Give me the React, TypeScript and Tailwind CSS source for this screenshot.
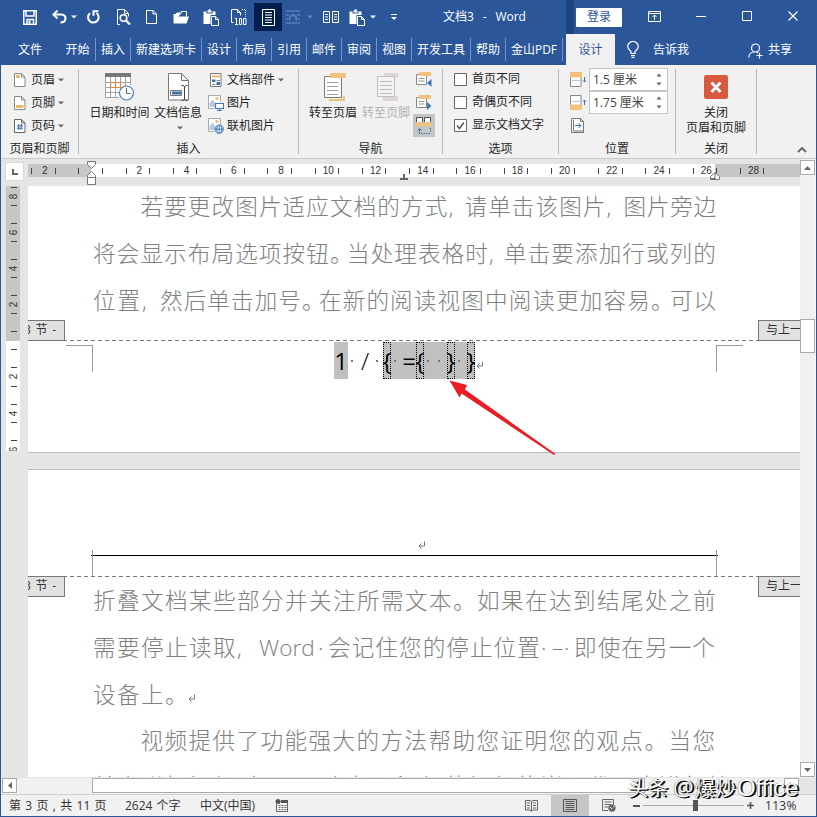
import React from "react";

const UI = "font-['Open_Sans','Noto_Sans_CJK_SC',sans-serif]";

type IconProps = { w: number; h: number; cls?: string; children: React.ReactNode };
const Ico = ({ w, h, cls = "", children }: IconProps) => (
  <svg width={w} height={h} viewBox={`0 0 ${w} ${h}`} fill="none" className={`block shrink-0 ${cls}`}>
    {children}
  </svg>
);

const Caret = ({ cls = "" }: { cls?: string }) => (
  <Ico w={6} h={4} cls={cls}>
    <path d="M0 0.5h6l-3 3z" fill="currentColor" />
  </Ico>
);

/* ---------- Title bar ---------- */

const PasteIcon = ({ cls }: { cls?: string }) => (
  <Ico w={16} h={17} cls={cls}>
    <path d="M0.5 2.5h3v2h6v-2h3v3.5h-5v9h-7z" fill="#fff" />
    <path d="M4.5 3.5v-2h1.300v-1.500h1.500v1.500h1.200v2z" fill="#fff" />
    <path d="M8.500 7.500h4l3 3v6h-7z M12.500 7.500v3h3" fill="#2b579a" stroke="#fff" />
  </Ico>
);

const TitleBar = () => (
  <div className="flex h-[34px] items-center text-white">
    <Ico w={14} h={15} cls="ml-[22px]">
      <path d="M0.750 0.750h12.500v13.500h-12.500z" stroke="#fff" strokeWidth="1.500" />
      <path d="M3 1v5h8v-5M4 14v-4.500h6.500v4.500" stroke="#fff" strokeWidth="1.500" />
      <path d="M5.500 10.500h2v3h-2z" fill="#fff" />
    </Ico>
    <Ico w={15} h={14} cls="ml-[15px]">
      <path d="M1.500 4.500H9.500C15 4.500 15 12.500 8.500 12.500" stroke="#fff" strokeWidth="2" />
      <path d="M5.500 0.500L1.500 4.500L5.500 8.500" stroke="#fff" strokeWidth="2" />
    </Ico>
    <Caret cls="ml-1" />
    <Ico w={14} h={14} cls="ml-[9px]">
      <path d="M4 3.200A5.300 5.300 0 1 0 10.500 3" stroke="#fff" strokeWidth="2" />
      <path d="M7.500 0.300v5.500M7.500 1.300h5" stroke="#fff" strokeWidth="2" />
    </Ico>
    <Ico w={15} h={16} cls="ml-4">
      <path d="M4 15.500H1.500V0.500h7l4 4v3M8.500 0.500v4h4" stroke="#fff" />
      <circle cx="7.500" cy="9" r="3.300" stroke="#fff" strokeWidth="1.600" />
      <path d="M10 11.500l4 4" stroke="#fff" strokeWidth="2.200" />
    </Ico>
    <Ico w={11} h={14} cls="ml-[15px]">
      <path d="M0.500 0.500h6.500l3.500 3.500v9.500H0.500zM7 0.500v3.500h3.500" stroke="#fff" />
    </Ico>
    <Ico w={16} h={13} cls="ml-4">
      <path d="M0.500 12V3h2L4 1.500h3V3" fill="#fff" />
      <path d="M2 4.500h4l2-2V0.500h5.500v5" stroke="#fff" />
      <path d="M3 5.500h13l-2.500 7H0.500z" fill="#fff" />
    </Ico>
    <PasteIcon cls="ml-3.5" />
    <Ico w={16} h={16} cls="ml-3">
      <path d="M2.500 13.500h-2V0.500h6l3 3v3M6.500 0.500v3h3" stroke="#fff" />
      <path d="M11 0.500h3.500v7" stroke="#fff" strokeDasharray="1 1" />
      <path d="M5.500 9v6M4 15.500h3M4 9.500h1.500M8.500 9.500h2v6h-2zM12.500 9.500h2.500v6h-2.500z" stroke="#fff" />
    </Ico>
    <div className="ml-[7px] flex h-7 w-7 items-center justify-center bg-[#001f4f]">
      <Ico w={13} h={17}>
        <path d="M0.500 0.500h12v16H0.500zM3 3.500h7M3 6h7M3 8.500h7M3 11h7M3 13.500h7" stroke="#fff" />
      </Ico>
    </div>
    <Ico w={14} h={14} cls="ml-1 opacity-40">
      <path d="M0 1h14M0 13h14M0 5h3M11 5h3M0 9h2M12 9h2" stroke="#9db7de" strokeWidth="1.500" />
      <path d="M3.500 10.500C3.500 3 10.500 3 10.500 10.500" stroke="#9db7de" strokeWidth="2" />
    </Ico>
    <Caret cls="ml-[7px] opacity-30" />
    <Ico w={16} h={13} cls="ml-2.5">
      <path d="M0.500 0.500h6v11h-6zM9.500 0.500h6v11h-6zM2 3.500h3M2 6h3M2 8.500h3M11 3.500h3M11 6h3M11 8.500h3" stroke="#fff" />
    </Ico>
    <PasteIcon cls="ml-2.5" />
    <Caret cls="ml-[5px]" />
    <Ico w={6} h={7} cls="ml-[15px]">
      <path d="M0 0.500h6" stroke="#fff" />
      <path d="M0 3h6l-3 3z" fill="#fff" />
    </Ico>
    <div className="ml-[46px] w-[123px] whitespace-pre text-[12px] leading-4 [word-spacing:1.3px]">文档3  -  Word</div>
    <div className="h-[34px] w-2 bg-[#1f4480]" />
    <div className="ml-0.5 flex h-[19px] w-[46px] items-center justify-center rounded-[1px] bg-white text-[12px] leading-4 text-[#2b579a]">登录</div>
    <Ico w={13} h={11} cls="ml-[26px] -mt-px">
      <path d="M0.500 0.500h12v10H0.500zM0.500 2.500h12M6.500 9V4M4.500 6l2-2l2 2" stroke="#fff" />
    </Ico>
    <Ico w={10} h={2} cls="ml-[35px]">
      <path d="M0 0.500h10" stroke="#fff" />
    </Ico>
    <Ico w={10} h={10} cls="ml-9 -mt-0.5">
      <path d="M0.500 0.500h9v9h-9z" stroke="#fff" />
    </Ico>
    <Ico w={10} h={10} cls="ml-9 -mt-0.5">
      <path d="M0.500 0.500l9 9M9.500 0.500l-9 9" stroke="#fff" strokeWidth="1.200" />
    </Ico>
  </div>
);

/* ---------- Ribbon tabs ---------- */

const Tab = ({ w, children, last }: { w: string; children: string; last?: boolean }) => (
  <div className={`${w} flex h-[23px] shrink-0 items-center justify-center border-r ${last ? "border-transparent" : "border-[#7395c8]"}`}>{children}</div>
);

const Tabs = () => (
  <div className="flex h-[31px] items-center whitespace-nowrap text-[12px] leading-4 text-white">
    <Tab w="w-[59px]" last>文件</Tab>
    <Tab w="w-9">开始</Tab>
    <Tab w="w-[35px]">插入</Tab>
    <Tab w="w-[71px]">新建选项卡</Tab>
    <Tab w="w-[35px]">设计</Tab>
    <Tab w="w-[35px]">布局</Tab>
    <Tab w="w-[35px]">引用</Tab>
    <Tab w="w-[35px]">邮件</Tab>
    <Tab w="w-[35px]">审阅</Tab>
    <Tab w="w-[35px]">视图</Tab>
    <Tab w="w-[59px]">开发工具</Tab>
    <Tab w="w-[35px]">帮助</Tab>
    <Tab w="w-[57px]">金山PDF</Tab>
    <div className="ml-[3px] flex h-[31px] w-[49px] items-center justify-center bg-[#f1f1f1] text-[#2b579a]">设计</div>
    <Ico w={12} h={17} cls="ml-3">
      <path d="M4 12.500V10.500C2 8.500 0.700 7.500 0.700 5.500a5.300 5 0 0 1 10.600 0C11.300 7.500 10 8.500 8 10.500V12.500zM4 14.500h4M4.500 16.300h3" stroke="#fff" strokeWidth="1.200" />
    </Ico>
    <div className="ml-3.5">告诉我</div>
    <Ico w={16} h={16} cls="ml-[59px] mt-0.5">
      <circle cx="7.500" cy="5" r="4" stroke="#fff" strokeWidth="1.200" />
      <path d="M0.700 14.500C1 11 3.500 9 6 9M8.500 9l1.500 1M11.500 9.500v6M8.500 12.500h6" stroke="#fff" strokeWidth="1.200" />
    </Ico>
    <div className="ml-1">共享</div>
  </div>
);

/* ---------- Ribbon ---------- */

const Group = ({ w, label, children }: { w: string; label: string; children: React.ReactNode }) => (
  <>
    <div className={`${w} flex shrink-0 flex-col pt-[3px]`}>
      <div className="flex h-[70px]">{children}</div>
      <div className="pt-[3px] text-center leading-4">{label}</div>
    </div>
    <div className="mt-1 h-[85px] w-px shrink-0 bg-[#b8b8b8]" />
  </>
);

const Row = ({ children }: { children: React.ReactNode }) => <div className="flex h-[23px] items-center">{children}</div>;

const pageOutline = "M0.500 0.500h7l3.500 3.500v9.500h-10.500zM7.500 0.500v3.500h3.500";

const Big = ({ cls, icon, label, caret }: { cls: string; icon: React.ReactNode; label: string; caret?: boolean }) => (
  <div className={`flex shrink-0 flex-col items-center ${cls}`}>
    <div className="mt-[5px] h-8">{icon}</div>
    <div className="leading-4">{label}</div>
    {caret && <Caret cls="mt-[5px] ml-1 text-[#666]" />}
  </div>
);

const JumpIcon = ({ off }: { off?: boolean }) => {
  const o = off ? "#dcd8d8" : "#f2c27e";
  const g = off ? "#c4bcc4" : "#7a7a7a";
  return off ? (
    <Ico w={22} h={28} cls="ml-1">
      <path d="M7 0h14v5H7zM6 23h15v5H6z" fill={o} />
      <path d="M0.500 3.500h17v20h-17z" fill="#f5f2f5" stroke={g} />
      <path d="M3 8.500h12M3 12.500h12M3 16.500h12M3 20.500h12" stroke={g} />
    </Ico>
  ) : (
    <Ico w={22} h={28} cls="ml-1">
      <path d="M6 0h16v5H6z" fill={o} />
      <path d="M5 27h15v-4" stroke="#ecc17f" strokeWidth="2" />
      <path d="M0.500 3.500h17v21h-17z" fill="#fff" stroke={g} />
      <path d="M6 1h12v4H6z" fill={o} />
      <path d="M3 9.500h11M3 13.500h11M3 17.500h11M3 21.500h11" stroke="#a0a0a0" />
    </Ico>
  );
};

const StepIcon = ({ next }: { next?: boolean }) => (
  <Ico w={16} h={16}>
    <path d="M0.500 2.500h10v10h-10z" fill="#fff" stroke="#888" />
    <path d="M3 0h12v4H3z" fill="#f2c27e" />
    <path d="M2.500 6.500h6M2.500 9h6" stroke="#999" />
    <path d={next ? "M11 7l4.500 4l-4.500 4z" : "M15.500 7l-4.500 4l4.500 4z"} fill="#3d78b8" />
  </Ico>
);

const Check = ({ on, children }: { on?: boolean; children: string }) => (
  <Row>
    <Ico w={13} h={13} cls="ml-[11px] -mt-px">
      <path d="M0.500 0.500h12v12h-12z" fill="#fff" stroke="#666" />
      {on && <path d="M3 6.500l2.500 3l4.500-6" stroke="#555" strokeWidth="1.400" />}
    </Ico>
    <span className="-mt-px ml-[5px]">{children}</span>
  </Row>
);

const Spin = ({ children }: { children: string }) => (
  <div className="flex h-[23px] w-[79px] items-center border border-[#c6c6c6] bg-white pl-[3px] text-[12px] text-[#444]">
    <span className="w-[63px] whitespace-nowrap">{children}</span>
    <Ico w={6} h={13}>
      <path d="M0.500 3.500l2.500-3l2.500 3zM0.500 9.500l2.500 3l2.500-3z" fill="#666" />
    </Ico>
  </div>
);

const PictureIcon = ({ globe }: { globe?: boolean }) => (
  <Ico w={16} h={16}>
    <path d="M6 13.500H0.500v-13h12v6" fill="#fff" stroke="#aaa" />
    <circle cx="9" cy="3.500" r="1.700" fill="#f2c27e" />
    <path d="M1.500 12v-4l3-3.500l3.500 4v3.500z" fill="#b8cbe0" />
    {globe ? (
      <>
        <circle cx="11.200" cy="11.200" r="4.200" fill="#fff" stroke="#3d78b8" />
        <path d="M7 11.200h8.400M11.200 7v8.400M9.700 7.500c-1.300 2-1.300 5.400 0 7.400M12.700 7.500c1.300 2 1.300 5.400 0 7.400" stroke="#3d78b8" />
      </>
    ) : (
      <>
        <path d="M7.500 8.500h8v5h-8z" fill="#fff" stroke="#3d78b8" strokeWidth="1.200" />
        <path d="M11.500 14v1.500M9 15.500h5" stroke="#3d78b8" />
      </>
    )}
  </Ico>
);

const Ribbon = () => (
  <div className="flex h-[94px] border-b border-[#c9c9c9] bg-[#f1f1f1] text-[12px] leading-4 whitespace-nowrap text-[#262626]">
    <Group w="w-[77px]" label="页眉和页脚">
      <div className="pl-[13px]">
        <Row>
          <Ico w={12} h={14}>
            <path d={pageOutline} fill="#fff" stroke="#888" />
            <path d="M2 2h4v3H2z" fill="#ecb96b" />
          </Ico>
          <span className="ml-[5px]">页眉</span>
          <Caret cls="ml-[3px] text-[#666]" />
        </Row>
        <Row>
          <Ico w={12} h={14}>
            <path d={pageOutline} fill="#fff" stroke="#888" />
            <path d="M2 9h7.500v3H2z" fill="#ecb96b" />
          </Ico>
          <span className="ml-[5px]">页脚</span>
          <Caret cls="ml-[3px] text-[#666]" />
        </Row>
        <Row>
          <Ico w={12} h={14}>
            <path d={pageOutline} fill="#fff" stroke="#666" />
            <path d="M5 5L4.300 11M7.500 5L6.800 11M3 6.800h6M2.800 9.200h6" stroke="#3d6fb0" />
          </Ico>
          <span className="ml-[5px]">页码</span>
          <Caret cls="ml-[3px] text-[#666]" />
        </Row>
      </div>
    </Group>

    <Group w="w-[219px]" label="插入">
      <Big
        cls="ml-2.5 w-[61px]"
        label="日期和时间"
        icon={
          <Ico w={30} h={28}>
            <path d="M0.500 4h25v20h-25z" fill="#fff" />
            <path d="M0 0h26v4H0z" fill="#777" />
            <path d="M0.500 4v20.500M5.500 4v20.500M10.500 4v20.500M15.500 4v14M20.500 4v10M25.500 4v8M0 9.500h26M0 14.500h18M0 19.500h14M0 24.500h14" stroke="#a3a3a3" />
            <path d="M5.500 9.500h5v5h-5zM10.500 9.500h5v5h-5z" stroke="#e08a4a" strokeWidth="1.200" />
            <circle cx="21.500" cy="20" r="7" fill="#fff" stroke="#4d7fbd" strokeWidth="1.200" />
            <path d="M21.500 15v5.500h4" stroke="#666" />
          </Ico>
        }
      />
      <Big
        cls="ml-[3px] mr-px w-[50px]"
        label="文档信息"
        caret
        icon={
          <Ico w={22} h={28} cls="ml-0.5">
            <path d="M0.500 0.500h13l7 7v19.500H0.500zM13.500 0.500v7h7" fill="#fff" stroke="#777" />
            <path d="M2.500 17.500h11v5h-11z" stroke="#777" fill="#fff" />
            <path d="M4 18.500h9v3H4z" fill="#3d6fb0" />
            <path d="M13.500 12.500h1.500l1.500 1l1.500-1h1.500M16.500 13.500v13M13.500 27.500h1.500l1.500-1l1.500 1h1.500" stroke="#444" />
          </Ico>
        }
      />
      <div className="ml-1">
        <Row>
          <Ico w={12} h={14} cls="ml-0.5">
            <path d="M0.500 0.500h10.500v13H0.500z" fill="#fff" stroke="#777" />
            <path d="M2 2.500h8v2H2z" fill="#ecb96b" />
            <path d="M2 6.500h3.500v2.500H2zM6.500 9h3.500v3H6.500z" fill="#3d6fb0" />
            <path d="M6.500 7.500h3.500M2 11.500h3.500" stroke="#888" />
          </Ico>
          <span className="ml-[5px]">文档部件</span>
          <Caret cls="ml-[3px] text-[#666]" />
        </Row>
        <Row>
          <PictureIcon />
          <span className="ml-[3px]">图片</span>
        </Row>
        <Row>
          <PictureIcon globe />
          <span className="ml-[3px]">联机图片</span>
        </Row>
      </div>
    </Group>

    <Group w="w-[143px]" label="导航">
      <Big cls="ml-[9px] w-[50px]" label="转至页眉" icon={<JumpIcon />} />
      <Big cls="ml-[3px] w-[50px] text-[#b1b1b1]" label="转至页脚" icon={<JumpIcon off />} />
      <div className="ml-0.5 w-[22px]">
        <div className="flex h-[23px] items-center justify-center"><StepIcon /></div>
        <div className="flex h-[23px] items-center justify-center"><StepIcon next /></div>
        <div className="flex h-[23px] items-center justify-center bg-[#c5c5c5]">
          <Ico w={16} h={18}>
            <path d="M0.500 5v-4.500h6v4.500M8.500 5v-4.500h6v4.500" fill="#fff" stroke="#555" />
            <path d="M0 5.500h16v3.500H0z" fill="#f2c27e" />
            <path d="M3.500 17v-5M1.500 13.500l2-2l2 2" stroke="#3d78b8" />
            <path d="M5 16.500h10M14.500 11v5" stroke="#3d78b8" strokeDasharray="1.500 1" />
          </Ico>
        </div>
      </div>
    </Group>

    <Group w="w-[115px]" label="选项">
      <div>
        <Check>首页不同</Check>
        <Check>奇偶页不同</Check>
        <Check on>显示文档文字</Check>
      </div>
    </Group>

    <Group w="w-[116px]" label="位置">
      <div className="ml-[11px] w-[19px]">
        <Row>
          <Ico w={17} h={15}>
            <path d="M0.500 5v9.500h10.500V5" stroke="#888" fill="#fff" />
            <path d="M0 0h12v5.500H0z" fill="#f2c27e" />
            <path d="M2.500 8.500h8" stroke="#888" strokeDasharray="1 1" />
            <path d="M14.500 5v5M13 8.500l1.500 1.500l1.500-1.500" stroke="#3d6fb0" />
          </Ico>
        </Row>
        <Row>
          <Ico w={17} h={15}>
            <path d="M0.500 10V0.500h10.500V10" stroke="#888" fill="#fff" />
            <path d="M0 9.500h12v5.500H0z" fill="#f2c27e" />
            <path d="M2.500 6.500h8" stroke="#888" strokeDasharray="1 1" />
            <path d="M14.500 10V5M13 6.500l1.500-1.500l1.500 1.500" stroke="#3d6fb0" />
          </Ico>
        </Row>
        <Row>
          <Ico w={13} h={15} cls="-mt-px ml-px">
            <path d="M0.500 0.500h9l3 3v11h-12zM9.500 0.500v3h3M2.500 2v11M2.500 13h10" fill="#fff" stroke="#777" />
            <path d="M4 7.500h6M7.500 5l2.500 2.500l-2.500 2.500" stroke="#3d6fb0" />
          </Ico>
        </Row>
      </div>
      <div>
        <Spin>1.5 厘米</Spin>
        <Spin>1.75 厘米</Spin>
      </div>
    </Group>

    <Group w="w-20" label="关闭">
      <div className="flex w-full flex-col items-center">
        <Ico w={24} h={24} cls="mt-[7px]">
          <rect width="24" height="24" rx="2" fill="#d9593f" />
          <path d="M7.500 7.500l9 9.500M16.500 7.500l-9 9.500" stroke="#fff" strokeWidth="3" />
        </Ico>
        <div className="mt-1.5 leading-4">关闭</div>
        <div className="-mt-px leading-4">页眉和页脚</div>
      </div>
    </Group>
    <Ico w={10} h={6} cls="mt-[82px] ml-10">
      <path d="M1 5l4-4l4 4" stroke="#666" strokeWidth="1.800" />
    </Ico>
  </div>
);

/* ---------- Rulers ---------- */

const hCells = Array.from({ length: 32 }, (_, i) => i - 2);
const vCells = Array.from({ length: 15 }, (_, i) => i - 8);

const HRuler = () => (
  <div className="flex h-[27px] shrink-0 bg-[#e5e5e5]">
    <div className="mt-[3px] ml-1 flex h-[19px] w-[19px] items-center justify-center border border-[#dadada] bg-white">
      <Ico w={6} h={6}>
        <path d="M1 0v5h5" stroke="#666" strokeWidth="2" />
      </Ico>
    </div>
    <div className="relative mt-[5px] ml-1 flex h-[13px] w-[772px] bg-[linear-gradient(90deg,#c6c6c6_63px,#fff_63px,#fff_687px,#c6c6c6_687px)]">
      <div className="flex w-[772px] overflow-hidden pl-[3px]">
        {hCells.map((n) => (
          <div key={n} className="flex w-[23.63px] shrink-0 items-center">
            <div className="h-1.5 w-px bg-[#444]" />
            <div className="flex-1 pl-[3px] text-center font-['Liberation_Sans',sans-serif] text-[10px] leading-3 text-[#333]">
              {n !== 0 && n % 2 === 0 ? Math.abs(n) : ""}
            </div>
          </div>
        ))}
      </div>
      <Ico w={9} h={26} cls="absolute top-[-3px] left-[59px]">
        <path d="M0.500 0.500h8v3l-4 4l-4-4zM0.500 16.500v-2l4-4l4 4v2zM0.500 16.500h8v7h-8z" fill="#fff" stroke="#777" />
      </Ico>
      <Ico w={8} h={6} cls="absolute top-[10px] left-[372px]">
        <path d="M4 0v4M0 5h8" stroke="#666" strokeWidth="2" />
      </Ico>
      <Ico w={10} h={8} cls="absolute top-[8px] left-[682px]">
        <path d="M0.500 7.500v-3l4.500-4l4.500 4v3z" fill="#fff" stroke="#777" />
        <path d="M5 1v6.500M1 6.500h4" stroke="#666" />
      </Ico>
    </div>
  </div>
);

const VRuler = () => (
  <div className="h-[592px] w-[27px] shrink-0 bg-[#e5e5e5] pl-[5px]">
    <div className="h-[265px] w-3.5 overflow-hidden bg-[linear-gradient(180deg,#c6c6c6_155px,#fff_155px)] pt-px">
      {vCells.map((n) => (
        <div key={n} className="flex h-[18.050px] flex-col items-center">
          <div className="ml-0.5 h-px w-1.5 shrink-0 bg-[#444]" />
          <div className="ml-0.5 flex flex-1 -rotate-90 items-center font-['Liberation_Sans',sans-serif] text-[10px] leading-3 text-[#333]">
            {n !== 0 && n % 2 === 0 ? Math.abs(n) : ""}
          </div>
        </div>
      ))}
    </div>
  </div>
);

/* ---------- Document ---------- */

/* Each run is [text, advance in px]; characters are spread evenly over the advance. */
type Run = [string, number];
const EM = 22.6;

const Line = ({ runs, indent }: { runs: Run[]; indent?: boolean }) => (
  <div className={`flex h-[46.800px] items-center whitespace-pre ${indent ? "pl-[112.500px]" : "pl-[65px]"}`}>
    {runs.map(([t, w], i) => {
      const cjk = t.length > 1 && t.charCodeAt(0) > 0x2fff;
      return (
        <span
          key={i}
          className="shrink-0 overflow-visible"
          style={{ width: w, letterSpacing: cjk ? w / t.length - EM : 0 }}
        >
          {t}
        </span>
      );
    })}
  </div>
);

const SectionTag = ({ right, cls }: { right?: boolean; cls: string }) => (
  <div
    className={`absolute flex h-[21px] items-center overflow-hidden border border-[#777] bg-[#e1e1e1] pb-px text-[12px] leading-4 whitespace-pre text-[#333] ${
      right ? "right-0 w-[42px] border-r-0 pl-[7px]" : "left-0 w-[37px] justify-end border-l-0 pr-2 [word-spacing:1.5px]"
    } ${cls}`}
  >
    {right ? "与上一" : "3 节 -"}
  </div>
);

const Return = ({ cls = "" }: { cls?: string }) => (
  <Ico w={8} h={8} cls={cls}>
    <path d="M6.500 0.500v4.500H1M3.500 2.500L1 5l2.500 2.500" stroke="#777" />
  </Ico>
);

const Dashed = ({ cls }: { cls: string }) => (
  <div className={`absolute right-0 left-0 h-px bg-[repeating-linear-gradient(90deg,#777_0,#777_4px,transparent_4px,transparent_7px)] ${cls}`} />
);

const Dot = ({ w }: { w: string }) => (
  <span className={`${w} flex shrink-0 justify-center`}>
    <span className="size-[2px] bg-[#777]" />
  </span>
);

const Brace = ({ children }: { children: string }) => (
  <span className="flex h-[37px] w-2 shrink-0 items-center justify-center border border-dotted border-black">{children}</span>
);

const body = "font-['Open_Sans','Noto_Sans_CJK_SC',sans-serif] text-[22.6px] font-light leading-[46.800px] text-[#808080]";

const Page1 = () => (
  <div className="relative h-[267px] shrink-0 overflow-hidden border-b border-[#bdbdbd] bg-white">
    <div className={`h-[156px] ${body} -mt-0.5`}>
      <Line indent runs={[["若要更改图片适应文档的方式", 308], [",", 16], ["请单击该图片", 142], [",", 17], ["图片旁边", 93.5]]} />
      <Line runs={[["将会显示布局选项按钮", 237], ["。", 17], ["当处理表格时", 142], [",", 15], ["单击要添加行或列的", 213]]} />
      <Line runs={[["位置", 49], [",", 18], ["然后单击加号", 142], ["。", 17], ["在新的阅读视图中阅读更加容易", 332], ["。", 19], ["可以", 47]]} />
    </div>
    <Dashed cls="top-[154px]" />
    <SectionTag cls="top-[134px]" />
    <SectionTag right cls="top-[134px]" />
    <div className="absolute top-[159px] left-[38px] h-[27px] w-[27px] border-t border-r border-[#999]" />
    <div className="absolute top-[159px] left-[688px] h-[27px] w-[27px] border-t border-l border-[#999]" />
    <div className="mt-0.5 flex h-[37px] items-center pl-[306px] font-['Open_Sans',sans-serif] text-[24px] leading-[37px] text-black">
      <span className="flex h-[37px] w-3.5 shrink-0 justify-center bg-[#c0c0c0]">1</span>
      <Dot w="w-[7px]" />
      <span className="flex w-5 justify-center font-light">/</span>
      <Dot w="w-1" />
      <span className="w-1" />
      <div className="flex h-[37px] items-center bg-[#c0c0c0]">
        <Brace>{"{"}</Brace>
        <Dot w="w-[7px]" />
        <span className="flex w-[18px] justify-end">=</span>
        <Brace>{"{"}</Brace>
        <Dot w="w-[7px]" />
        <Dot w="w-4" />
        <Brace>{"}"}</Brace>
        <Dot w="w-2" />
        <span className="w-1" />
        <Brace>{"}"}</Brace>
      </div>
      <Return cls="mt-2 ml-px" />
    </div>
  </div>
);

const Page2 = () => (
  <div className="relative h-[308px] shrink-0 overflow-hidden border-t border-[#bdbdbd] bg-white">
    <Return cls="mt-[71px] ml-[390px]" />
    <div className="mt-[6px] ml-[63px] h-px w-[627px] bg-black" />
    <div className="absolute top-[80px] left-16 h-[26px] w-[625px] border-x border-[#999]" />
    <Dashed cls="top-[106px]" />
    <div className={`mt-[22px] ${body}`}>
      <Line runs={[["折叠文档某些部分并关注所需文本", 360], ["。", 24], ["如果在达到结尾处之前", 240]]} />
      <Line
        runs={[["需要停止读取", 144], [",", 22], ["Word", 59], ["·", 10], ["会记住您的停止位置", 213], ["·", 11], ["–", 12], ["·", 10], ["即使在另一个", 142]]}
      />
      <div className="flex items-center">
        <Line runs={[["设备上", 72], ["。", 23]]} />
        <Return cls="mt-1.5" />
      </div>
      <Line indent runs={[["视频提供了功能强大的方法帮助您证明您的观点", 504], ["。", 24], ["当您", 48]]} />
      <div className="-mt-px">
        <Line runs={[["单击联机视频时", 167], [",", 18], ["可以在想要添加的视频的嵌入代码中进行粘", 453]]} />
      </div>
    </div>
    <SectionTag cls="top-[106px]" />
    <SectionTag right cls="top-[106px]" />
  </div>
);

const VScroll = () => (
  <div className="flex w-[15px] shrink-0 flex-col bg-[#f1f1f1]">
    <div className="mt-px flex h-[15px] items-center justify-center border border-[#ababab] bg-white">
      <Ico w={7} h={4}><path d="M0 4h7l-3.500-4z" fill="#666" /></Ico>
    </div>
    <div className="mt-36 h-[34px] border border-[#ababab] bg-white" />
    <div className="mt-auto mb-px flex h-[15px] items-center justify-center border border-[#ababab] bg-white">
      <Ico w={7} h={4}><path d="M0 0h7l-3.500 4z" fill="#666" /></Ico>
    </div>
  </div>
);

const HScroll = () => (
  <div className="flex h-4 bg-[#f1f1f1]">
    <div className="ml-px flex h-[15px] w-[15px] items-center justify-center border border-[#ababab] bg-white">
      <Ico w={4} h={7}><path d="M4 0v7l-4-3.500z" fill="#666" /></Ico>
    </div>
    <div className="ml-[75px] h-[15px] w-[553px] border border-[#ababab] bg-white" />
    <div className="ml-[139px] flex h-[15px] w-[15px] items-center justify-center border border-[#ababab] bg-white">
      <Ico w={4} h={7}><path d="M0 0v7l4-3.500z" fill="#666" /></Ico>
    </div>
    <div className="flex-1 bg-[#e5e5e5]" />
  </div>
);

const StatusBar = () => (
  <div className="flex h-[22px] items-center border-t border-[#d0d0d0] bg-[#f1f1f1] text-[12px] leading-4 whitespace-nowrap text-[#333]">
    <div className="ml-2 w-[116px] whitespace-pre [word-spacing:1.2px]">第 3 页 , 共 11 页</div>
    <div className="w-[75px] [word-spacing:1px]">2624 个字</div>
    <div className="w-[75px]">中文(中国)</div>
    <Ico w={13} h={13}>
      <path d="M1.500 5v7.500h11V1.500H6" stroke="#666" />
      <circle cx="3" cy="2.500" r="2.500" fill="#555" />
      <path d="M6 1h7v3H6z" fill="#555" />
      <path d="M3.500 6.500h8M3.500 8.500h8M3.500 10.500h8" stroke="#666" strokeDasharray="2 1" />
    </Ico>
    <Ico w={13} h={13} cls="ml-[237px]">
      <path d="M6.500 2v10.500M0.500 1.500h4.500l1.500 1l1.500-1h4.500v9.500H8l-1.500 1l-1.500-1H0.500zM2 4h3M2 6.500h3M2 9h3M8 4h3M8 6.500h3M8 9h3" stroke="#666" />
    </Ico>
    <div className="ml-[13px] flex h-[21px] w-[38px] items-center justify-center bg-[#c6c6c6]">
      <Ico w={14} h={13}>
        <path d="M0.500 0.500h13v12h-13zM2.500 2.500h9M2.500 4.500h9M2.500 6.500h9M2.500 8.500h9M2.500 10.500h9" stroke="#555" />
      </Ico>
    </div>
    <Ico w={14} h={13} cls="ml-[13px]">
      <path d="M6 11.500H0.500V0.500h11v5M2.500 3h7M2.500 5.500h6M2.500 8h4" stroke="#666" />
      <circle cx="10" cy="9" r="3.700" fill="#666" />
      <path d="M8 8l2 2M11 7l1.500 1" stroke="#f1f1f1" />
    </Ico>
    <div className="ml-[17px] h-0.5 w-[7px] bg-[#555]" />
    <div className="ml-[3px] flex h-[11px] w-[101px] items-center">
      <div className="h-px w-[50px] bg-[#aaa]" />
      <div className="h-[11px] w-[5px] bg-[#555]" />
      <div className="h-px flex-1 bg-[#aaa]" />
    </div>
    <Ico w={7} h={7} cls="ml-[3px]">
      <path d="M3.500 0v7M0 3.500h7" stroke="#555" strokeWidth="1.600" />
    </Ico>
    <div className="ml-[11px] tracking-[0.3px]">113%</div>
  </div>
);

export default function App() {
  return (
    <div className={`relative flex h-[817px] w-[817px] flex-col overflow-hidden border-x border-b border-[#2b579a] bg-[#2b579a] ${UI}`}>
      <TitleBar />
      <Tabs />
      <Ribbon />
      <div className="flex h-[619px] bg-[#e5e5e5]">
        <div className="flex w-[799px] flex-col">
          <HRuler />
          <div className="flex">
            <VRuler />
            <div className="flex h-[592px] w-[772px] flex-col">
              <Page1 />
              <div className="h-4 shrink-0 bg-[#e5e5e5]" />
              <Page2 />
            </div>
          </div>
        </div>
        <VScroll />
        <div className="w-px bg-[#f7f7f7]" />
      </div>
      <HScroll />
      <StatusBar />
      <Ico w={110} h={78} cls="absolute top-[379px] left-[448px]">
        <path d="M0.500 1.500L18 6L16 10.500L106.500 75L105 76L12.500 14.500L10.500 18.500Z" fill="#ec1c24" />
      </Ico>
      <div className="absolute top-[772px] left-[627px] flex items-baseline text-[20px] leading-[30px] whitespace-nowrap text-white [text-shadow:1px_1px_0_#111,2px_1px_0_#111,-0.5px_-0.5px_0_#777]">
        <span className="w-[45px]">头条</span>
        <span className="w-[22px] text-[23px]">@</span>
        <span className="w-[42px] tracking-[0.5px]">爆炒</span>
        <span className="font-['Liberation_Sans',sans-serif] text-[24px] tracking-[-0.2px]">Office</span>
      </div>
    </div>
  );
}
